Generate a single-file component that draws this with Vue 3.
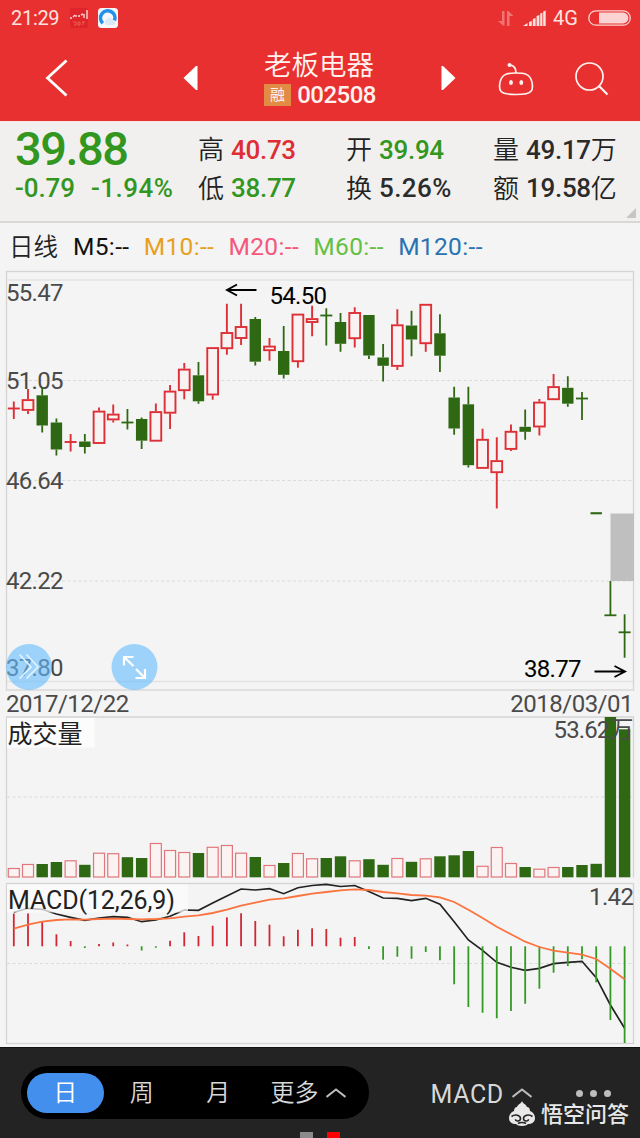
<template>
  <div class="stock-page">
    <header class="top">
      <div class="status-bar">
        <span class="clock">21:29</span>
        <svg class="mini-chart" width="20" height="20" viewBox="0 0 20 20">
          <rect x="1" y="0" width="18" height="20" rx="2" fill="#e0242c" />
          <path d="M1 10h2M4 9l2-2M7 9V7M9 8h2M12 7l2-1M15 6v4M18 2v9" stroke="#fbd9d6" stroke-width="1.4" fill="none" />
          <path d="M4 14h3v3H5M9 14h2v3H9zM13 14h3M14 14v3" stroke="#e8604a" fill="none" />
        </svg>
        <svg class="browser" width="20" height="20" viewBox="0 0 20 20">
          <rect width="20" height="20" rx="3.5" fill="#f4f8fc" />
          <path d="M4.8 15.2A7.2 7.2 0 1 1 16.500 12.500" stroke="#2590ea" stroke-width="3.6" fill="none" />
          <path d="M9 17a3 3 0 0 1-.5-5.500a3.400 3.400 0 0 1 6.300.6A2.600 2.600 0 0 1 16 17z" fill="#dbe9f7" />
        </svg>
        <span class="spacer"></span>
        <svg class="net" width="16" height="17" viewBox="0 0 16 17" fill="#ef7474">
          <path d="M4 1h2.500v14.500H5L0 11h4zM9 16V1h1.500L15.500 6H11.500v10z" />
        </svg>
        <svg class="signal" width="23" height="16" viewBox="0 0 23 16" fill="#fde3df">
          <path d="M0 16l4.500-3V16zM6 16v-4l2.800-1v5zM9.800 16V9l2.800-1v8zM13.600 16V6l2.800-1v11zM17.200 16V3.500l2.200-.7V16zM20.200 16V1.500L22.700.5V16z" />
        </svg>
        <span class="net-type">4G</span>
        <svg class="battery" width="44" height="16" viewBox="0 0 44 16">
          <rect x=".8" y=".8" width="41.500" height="14.400" rx="7.200" fill="none" stroke="#fbd3d0" stroke-width="1.300" />
          <path d="M11 2.600h24a5.400 5.400 0 0 1 0 10.800H11z" fill="#fbd3d3" />
        </svg>
      </div>
      <div class="nav">
        <svg width="24" height="38" viewBox="0 0 24 38">
          <path d="M21.500 1.500L2.500 19l19 17.500" fill="none" stroke="#fff" stroke-width="2.800" />
        </svg>
        <svg class="prev" width="15" height="24" viewBox="0 0 15 24">
          <path d="M14.500 0v24h-1.500L0.500 12 13 0z" fill="#fff" />
        </svg>
        <div class="title">
          <div class="name">老板电器</div>
          <div class="code-row">
            <span class="tag">融</span>
            <span class="code">002508</span>
          </div>
        </div>
        <svg class="next" width="15" height="24" viewBox="0 0 15 24">
          <path d="M.5 0v24H2l12.500-12L2 0z" fill="#fff" />
        </svg>
        <svg class="robot" width="38" height="34" viewBox="0 0 38 34" fill="none" stroke="#fff3ef" stroke-width="1.700">
          <path d="M19 11c8 0 12.500.8 14.700 5.500 2.200 4.700 2.400 10.500.3 12.800C32 32 26 32.500 19 32.500S6 32 4 29.300c-2.100-2.300-1.900-8.100.3-12.800C6.500 11.800 11 11 19 11z" />
          <path d="M19 11c0-4.500-1.500-7.500-6-7.800" />
          <circle cx="12.500" cy="3" r="2" fill="#fff3ef" stroke="none" />
          <ellipse cx="14" cy="20.500" rx="1.900" ry="2.600" fill="#fff3ef" stroke="none" />
          <ellipse cx="24.300" cy="20.500" rx="1.900" ry="2.600" fill="#fff3ef" stroke="none" />
        </svg>
        <svg class="search" width="34" height="34" viewBox="0 0 34 34" fill="none" stroke="#fff3ef" stroke-width="1.700">
          <circle cx="14.500" cy="14.500" r="13.500" />
          <path d="M24 24l8.500 8.500" stroke-width="2.200" />
        </svg>
      </div>
    </header>

    <section class="quote">
      <div class="main-price">
        <div class="price">39.88</div>
        <div class="change"><span>-0.79</span><span class="percent">-1.94%</span></div>
      </div>
      <div v-for="(col, i) in quoteCols" :key="i" class="quote-col">
        <div v-for="item in col" :key="item.label" class="quote-item">
          <span class="label">{{ item.label }}</span>
          <span :class="['num', item.color]">{{ item.value }}</span>
          <span v-if="item.unit" class="unit">{{ item.unit }}</span>
        </div>
      </div>
      <svg class="corner" width="10" height="10" viewBox="0 0 10 10"><path d="M10 0v10H0z" fill="#c6c6c6" /></svg>
    </section>

    <div class="ma-row">
      <span class="period">日线</span>
      <span v-for="ma in maList" :key="ma" :class="['ma', ma.toLowerCase()]">{{ ma }}:--</span>
    </div>

    <!-- K 线 -->
    <svg class="chart" width="640" height="421" viewBox="0 270 640 421">
      <g class="frame">
        <rect x="6.500" y="271.500" width="627" height="418.500" />
        <path d="M7 280H633M7 681.500H633" class="thin" />
      </g>
      <path d="M7 380.500H633M7 480.500H633M7 581H633" class="dash" />
      <g class="axis">
        <text v-for="t in priceAxis" :key="t.text" x="6" :y="t.y" textLength="57.500">{{ t.text }}</text>
      </g>
      <rect x="610.500" y="513.500" width="23.500" height="67.500" fill="#bfbfbf" />
      <g v-for="(c, i) in candles" :key="i" :class="c[0] === 'r' ? 'up' : 'down'">
        <template v-if="c[3] - c[2] < 1">
          <path :d="`M${cx(i)} ${c[1]}V${c[4]}`" />
          <path :d="`M${cx(i) - 6} ${c[2]}h12`" />
        </template>
        <template v-else>
          <path :d="`M${cx(i)} ${c[1]}V${c[2]}M${cx(i)} ${c[3]}V${c[4]}`" />
          <rect
            v-if="c[0] === 'r'"
            :x="cx(i) - 5.4"
            :y="c[2] + 0.8"
            width="10.800"
            :height="c[3] - c[2] - 1.6"
          />
          <rect v-else class="solid" :x="cx(i) - 5.7" :y="c[2]" width="11.400" :height="c[3] - c[2]" />
        </template>
      </g>
      <g class="mark">
        <path d="M256.500 290H227M237 284.500L227 290l10 5.500" />
        <text x="269.500" y="303.500" textLength="57.500">54.50</text>
        <path d="M594.500 671.500H625M614.500 666l10.500 5.500-10.500 5.500" />
        <text x="524" y="677" textLength="57.500">38.77</text>
      </g>
      <circle cx="29" cy="667" r="23" class="bubble" />
      <path d="M19.500 654.500l11.500 12.500-11.500 11.500M26.500 654.500l11.500 12.500-11.500 11.500" class="bubble-icon thin-icon" />
      <circle cx="134.500" cy="667" r="23" class="bubble" />
      <path d="M124 665.500v-8.500h9.500M124.500 657.500l9 8.500M145 669v9h-9.500M144.500 677.500l-8.500-8.500" class="bubble-icon" />
    </svg>

    <div class="dates">
      <span>2017/12/22</span>
      <span>2018/03/01</span>
    </div>

    <!-- 成交量 -->
    <svg class="chart" width="640" height="166" viewBox="0 716 640 166">
      <path d="M6.500 877.500V717H633.500V877.500" class="frame" />
      <path d="M7 797H633" class="dash" />
      <rect x="7" y="718" width="87.500" height="29.500" fill="#fcfcfc" />
      <text x="7.500" y="743" class="pane-title" textLength="75">成交量</text>
      <g v-for="(v, i) in volumes" :key="i">
        <rect
          v-if="candles[i][0] === 'r'"
          class="vol-up"
          :x="cx(i) - 5.5"
          :y="v + 0.5"
          width="11"
          :height="876.5 - v"
        />
        <rect v-else class="vol-down" :x="cx(i) - 5.7" :y="v" width="11.400" :height="877.3 - v" />
      </g>
      <g class="axis">
        <text x="553.500" y="738" textLength="80">53.62万</text>
      </g>
    </svg>

    <!-- MACD -->
    <svg class="chart" width="640" height="165" viewBox="0 882 640 165">
      <rect x="6.500" y="883.500" width="627" height="160" class="frame" />
      <path d="M7 963.500H633" class="dash" />
      <polyline :points="toPoints(dif)" class="dif" />
      <rect x="7" y="884.500" width="181" height="28" fill="#fcfcfc" opacity=".72" />
      <path
        v-for="(m, i) in macd"
        :key="i"
        :d="`M${cx(i)} ${ZERO}V${m}`"
        :class="m < ZERO ? 'bar-up' : 'bar-down'"
      />
      <polyline :points="toPoints(dea)" class="dea" />
      <text x="8" y="908.500" class="pane-title" textLength="167">MACD(12,26,9)</text>
      <g class="axis">
        <text x="589" y="905" textLength="45">1.42</text>
      </g>
    </svg>

    <footer class="bottom">
      <div class="tabs">
        <span class="tab active">日</span>
        <span class="tab">周</span>
        <span class="tab">月</span>
        <span class="tab more">
          更多
          <svg width="20" height="10" viewBox="0 0 20 10"><path d="M.5 9L10 1.500 19.500 9" /></svg>
        </span>
      </div>
      <div class="indicator">
        <span>MACD</span>
        <svg width="20" height="10" viewBox="0 0 20 10"><path d="M.5 9L10 1.500 19.500 9" /></svg>
      </div>
      <div class="dots"><i></i><i></i><i></i></div>
      <div class="pager"><i></i><i class="on"></i></div>
      <div class="watermark">
        <svg width="26" height="25" viewBox="0 0 26 25">
          <path d="M13 0c1 3 4 3 5 6 2 0 3 2 3 4 3 1 5 4 5 7 0 4-3 6-7 6-1 1-3 2-6 2s-5-1-6-2c-4 0-7-2-7-6 0-3 2-6 5-7 0-2 1-4 3-4 1-3 4-3 5-6z" fill="#e8e8e8" />
          <path d="M2.500 15.500c4-3 9-1 9 2 0 3-5 3.500-5 .7M23.500 15.500c-4-3-9-1-9 2 0 3 5 3.500 5 .7M9 22.500c2-1.300 6-1.300 8 0" fill="none" stroke="#232323" />
        </svg>
        <span>悟空问答</span>
      </div>
    </footer>
  </div>
</template>

<script setup>
const ZERO = 946.3;

const quoteCols = [
  [
    { label: '高', value: '40.73', color: 'red' },
    { label: '低', value: '38.77', color: 'green' },
  ],
  [
    { label: '开', value: '39.94', color: 'green' },
    { label: '换', value: '5.26%', color: 'wide' },
  ],
  [
    { label: '量', value: '49.17', unit: '万' },
    { label: '额', value: '19.58', unit: '亿' },
  ],
];

const maList = ['M5', 'M10', 'M20', 'M60', 'M120'];

const priceAxis = [
  { text: '55.47', y: 301 },
  { text: '51.05', y: 388.5 },
  { text: '46.64', y: 488.5 },
  { text: '42.22', y: 589 },
  { text: '37.80', y: 675.5 },
];

// [颜色, 最高, 实体上沿, 实体下沿, 最低]
const candles = [
  ['r', 401.5, 408.5, 408.5, 419],
  ['r', 389, 399.3, 410.7, 414],
  ['g', 387.5, 395.3, 425.5, 432.5],
  ['g', 418.5, 422.5, 449.5, 455.5],
  ['r', 434, 442, 442, 451.5],
  ['g', 434, 441.5, 447, 453.5],
  ['r', 407.5, 410.8, 443.8, 443.8],
  ['r', 404.5, 413.8, 420.2, 422.5],
  ['g', 409, 422.5, 422.5, 429.5],
  ['g', 417.5, 419, 440.7, 449],
  ['r', 403.5, 411.3, 441.5, 441.5],
  ['r', 385, 390.8, 413.5, 429],
  ['r', 363, 368.8, 391, 399.3],
  ['g', 362, 375.3, 401.3, 403.7],
  ['r', 347.3, 347.3, 395.3, 399.7],
  ['r', 303.7, 332.2, 349, 354.7],
  ['r', 303.7, 326.2, 338.8, 345],
  ['g', 317, 319, 361.7, 365.5],
  ['r', 338, 345.8, 351, 360.7],
  ['g', 326, 351, 374.8, 378.5],
  ['r', 313.8, 313.8, 362, 367.7],
  ['r', 305.7, 318.3, 322.8, 336.2],
  ['g', 308.3, 315.5, 315.5, 345.5],
  ['g', 313, 322, 343.8, 351.7],
  ['r', 307.3, 312.2, 339, 347.5],
  ['g', 315, 315, 355.5, 359],
  ['g', 344, 357.5, 365.8, 381.5],
  ['r', 309.3, 324.5, 366.7, 370],
  ['g', 310.7, 325.5, 339.5, 356.3],
  ['r', 304, 304, 344, 351.8],
  ['g', 314.3, 333.3, 355.7, 372],
  ['g', 386.7, 397.5, 428.5, 434.7],
  ['g', 386.7, 404.3, 465.2, 467.5],
  ['r', 428.7, 439, 468.7, 468.7],
  ['r', 437.3, 460.3, 473, 508.5],
  ['r', 424.5, 431, 449.7, 451],
  ['g', 409.5, 426.8, 431.8, 439.7],
  ['r', 399, 401.8, 427.3, 435.5],
  ['r', 374, 386.3, 400, 400],
  ['g', 376.3, 387.8, 403.7, 406.7],
  ['g', 392, 398.5, 398.5, 420],
  ['g', 512.2, 512.2, 514.3, 514.3],
  ['g', 581, 615.3, 615.3, 616],
  ['g', 614.3, 632.3, 632.3, 657.7],
];

const volumes = [
  868, 864, 864, 862, 860.3, 864.8, 852.7, 853.2, 857.2, 858, 843, 850, 852, 853, 846.8, 845, 852.7, 857,
  865, 863, 853, 858.3, 858, 856.3, 860.3, 859.2, 864.8, 858, 861.8, 858.3, 856.3, 855.3, 851, 865.8, 847,
  863, 867, 868.7, 867, 867, 865, 863.8, 717, 729.3,
];

const macd = [
  913.5, 913.5, 922, 934.3, 941, 948, 944, 942.5, 944.5, 950.5, 947.8, 940.7, 932.3, 936, 925.7, 917.3,
  913.3, 921, 924.7, 936.3, 929.7, 928.3, 929, 937.7, 937, 949, 959.7, 956.7, 958.7, 952, 960.3, 984.3,
  1007, 1012.7, 1018.3, 1011, 1003.7, 988.7, 972.7, 966, 959.3, 982.3, 1020, 1043,
];

const dif = [
  912.3, 908.3, 909.3, 914, 917.3, 920.3, 918, 916.7, 917.3, 921.7, 920, 916.3, 910, 910.3, 903, 896,
  889, 890, 888.7, 893.7, 887.7, 885.5, 884.3, 886.5, 885.5, 891.5, 898, 898.3, 900.7, 898.3, 904.3,
  921.7, 940, 950.3, 962.3, 967.3, 970.3, 968.3, 963.7, 962.3, 961.3, 977.7, 1005, 1028.3,
];

const dea = [
  928.7, 924.7, 921.7, 920, 919.3, 919.7, 919, 918.7, 919, 919.3, 919, 918.3, 916.7, 915.3, 913, 909.7,
  905.7, 902.7, 899.7, 898.3, 896, 893.7, 892, 890.3, 889.3, 890, 892, 893.3, 895, 895.7, 897.3, 902,
  909.7, 918, 926.7, 934.3, 941.7, 947, 950.7, 952.7, 954.7, 959, 968.7, 979.3,
];

function cx(i) {
  return +(13.8 + i * 14.205).toFixed(2);
}

function toPoints(list) {
  return list.map((y, i) => `${cx(i)},${y}`).join(' ');
}
</script>

<style>
body {
  margin: 0;
  background: #f4f4f4;
}
</style>

<style scoped>
.stock-page {
  width: 640px;
  height: 1138px;
  overflow: hidden;
  display: flex;
  flex-direction: column;
  background: #f4f4f4;
  color: #333;
  font-family: Roboto, "Noto Sans CJK SC", sans-serif;
}

.top {
  height: 121px;
  flex: none;
  background: #e83030;
  box-sizing: border-box;
}

.status-bar {
  height: 36px;
  padding: 0 8px 0 11px;
  display: flex;
  align-items: center;
  color: #fde3df;
  font-size: 20px;
}

.clock {
  width: 58px;
  letter-spacing: -0.3px;
}

.mini-chart {
  margin-right: 9px;
}

.spacer {
  flex: 1;
}

.net {
  margin-right: 9px;
}

.signal {
  margin-right: 7px;
}

.net-type {
  width: 35px;
}

.nav {
  height: 85px;
  display: flex;
  align-items: center;
  padding: 0 31px 0 45px;
}

.nav > svg {
  flex: none;
  margin-bottom: 2px;
}

.nav .prev {
  margin: 0 66px 1px 114px;
}

.title {
  width: 112px;
  flex: none;
  color: #fff3ef;
}

.name {
  font-size: 27.5px;
  line-height: 32px;
  padding-top: 5px;
  font-weight: 350;
  white-space: nowrap;
}

.code-row {
  display: flex;
  align-items: center;
  height: 26px;
  margin-bottom: 5px;
}

.tag {
  width: 28px;
  height: 22px;
  background: #e28b45;
  font-size: 15px;
  line-height: 22px;
  text-align: center;
  margin-right: 6px;
}

.code {
  font-size: 24px;
  font-weight: 500;
  letter-spacing: -0.5px;
}

.nav .next {
  margin-left: 65px;
  margin-bottom: 1px;
}

.nav .robot {
  margin-left: 41px;
  margin-bottom: 0;
}

.nav .search {
  margin-left: 40px;
  margin-bottom: 0;
}

.quote {
  position: relative;
  height: 102px;
  flex: none;
  background: #f1f0ef;
  border-top: 1px solid #f6e6dd;
  border-bottom: 2px solid #d8d8d8;
  box-sizing: border-box;
  display: grid;
  grid-template-columns: 183px 148px 147px 1fr;
  padding-left: 15px;
}

.main-price {
  color: #32961f;
  font-weight: 500;
}

.price {
  font-size: 47px;
  line-height: 50px;
  padding-top: 2px;
  letter-spacing: -1.5px;
}

.change {
  font-size: 26px;
  line-height: 28px;
  display: flex;
  gap: 16px;
  letter-spacing: -0.1px;
}

.change .percent {
  letter-spacing: 0.5px;
}

.quote-col {
  padding-top: 8.500px;
}

.quote-item {
  display: flex;
  align-items: center;
  height: 38.500px;
  font-size: 26px;
  white-space: nowrap;
}

.label,
.unit {
  font-weight: 350;
  color: #222;
  padding-bottom: 4px;
}

.label {
  width: 33px;
}

.num {
  font-weight: 500;
  color: #2b2b2b;
  letter-spacing: -0.3px;
}

.num.wide {
  letter-spacing: 0.4px;
}

.num.red {
  color: #df2d35;
}

.num.green {
  color: #32961f;
}

.corner {
  position: absolute;
  right: 4px;
  bottom: 3px;
}

.ma-row {
  height: 47px;
  flex: none;
  padding-left: 9px;
  display: flex;
  align-items: center;
  font-size: 24.500px;
  white-space: nowrap;
}

.period {
  width: 64px;
  font-weight: 350;
  color: #222;
  padding-bottom: 3px;
}

.ma {
  color: #111;
  margin-right: 14.300px;
  letter-spacing: 0.35px;
}

.m10 {
  color: #e8a01c;
}

.m20 {
  color: #f5577b;
}

.m60 {
  color: #63c043;
}

.m120 {
  color: #2a73b0;
}

.chart {
  display: block;
  flex: none;
}

.frame {
  fill: none;
  stroke: #d4d4d4;
  stroke-width: 1.300;
}

.thin {
  stroke: #e3e3e3;
}

.dash {
  stroke: #dadada;
  stroke-width: 1.200;
  stroke-dasharray: 3 2.500;
  fill: none;
}

.axis text {
  font-size: 24px;
  fill: #4a4a4a;
}

.up {
  stroke: #dd2f35;
  stroke-width: 1.900;
  fill: none;
}

.up rect {
  fill: #f8f3f2;
}

.down {
  stroke: #2f6813;
  stroke-width: 1.800;
}

.down .solid {
  fill: #2f6813;
  stroke: none;
}

.mark path {
  fill: none;
  stroke: #000;
  stroke-width: 1.900;
}

.mark text {
  font-size: 24px;
  fill: #000;
}

.bubble {
  fill: #62bdff;
  opacity: 0.6;
}

.bubble-icon {
  fill: none;
  stroke: #fff;
  stroke-width: 2.200;
}

.thin-icon {
  stroke-width: 1.600;
  stroke: #e2f3ff;
}

.dates {
  height: 25px;
  flex: none;
  padding: 2px 7px 0 6px;
  box-sizing: border-box;
  display: flex;
  justify-content: space-between;
  align-items: center;
  font-size: 24px;
  line-height: 23px;
  letter-spacing: -0.5px;
  color: #4a4a4a;
}

.pane-title {
  font-size: 25px;
  fill: #222;
}

.vol-up {
  fill: #fbf3f2;
  stroke: #e0777c;
  stroke-width: 1.200;
}

.vol-down {
  fill: #2f6813;
}

.dif {
  fill: none;
  stroke: #222;
  stroke-width: 1.700;
}

.dea {
  fill: none;
  stroke: #fb7440;
  stroke-width: 1.800;
}

.bar-up {
  stroke: #cf2733;
  stroke-width: 1.800;
}

.bar-down {
  stroke: #339a24;
  stroke-width: 1.800;
}

.bottom {
  position: relative;
  flex: 1;
  background: #232323;
  border-top: 1px solid #111;
  color: #d8d8d8;
  font-size: 24px;
  display: flex;
  align-items: flex-start;
  padding-left: 21px;
}

.tabs {
  margin-top: 18px;
  width: 347.500px;
  height: 53px;
  border-radius: 27px;
  background: #000;
  display: flex;
  align-items: center;
  box-sizing: border-box;
  padding-left: 6px;
  font-weight: 350;
}

.tab {
  width: 76.500px;
  height: 40px;
  line-height: 41px;
  text-align: center;
  border-radius: 20px;
}

.tab.active {
  background: #438fee;
  color: #fff;
}

.tab.more {
  width: 96px;
  text-align: left;
  padding-left: 14px;
  white-space: nowrap;
}

.tab.more path,
.indicator path {
  fill: none;
  stroke: #bcbcbc;
  stroke-width: 2;
}

.tab.more svg {
  margin-left: 2px;
  vertical-align: 3px;
}

.indicator {
  display: flex;
  align-items: center;
  gap: 8px;
  margin: 25px 0 0 62px;
  height: 42px;
  font-size: 25px;
  letter-spacing: 0.6px;
  width: 105px;
  white-space: nowrap;
}

.indicator svg {
  margin-bottom: 3px;
}

.dots {
  display: flex;
  gap: 7px;
  margin: 42px 0 0 40px;
}

.dots i {
  width: 7px;
  height: 7px;
  border-radius: 50%;
  background: #bdbdbd;
}

.pager {
  position: absolute;
  left: 300px;
  bottom: 0;
  display: flex;
  gap: 14px;
}

.pager i {
  width: 13px;
  height: 6px;
  background: #8b8b8b;
}

.pager .on {
  background: #f00;
}

.watermark {
  position: absolute;
  left: 509px;
  bottom: 10px;
  display: flex;
  align-items: center;
  gap: 6px;
  height: 30px;
  color: #e8e8e8;
  font-size: 22px;
  font-weight: 500;
}

.watermark path {
  stroke-width: 1.600;
}

.watermark span {
  padding-bottom: 2px;
}
</style>
